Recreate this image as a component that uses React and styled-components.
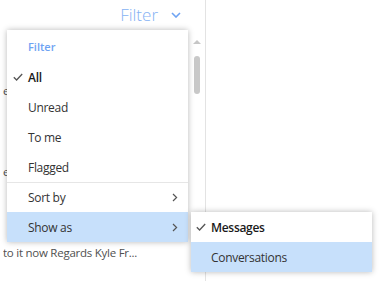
import React from "react";
import styled, { createGlobalStyle } from "styled-components";

const Global = createGlobalStyle`
  html, body { margin: 0; padding: 0; background: #fff; }
  body { font-family: "Open Sans", "Noto Sans", Arial, sans-serif; overflow: hidden; }
  * { box-sizing: border-box; }
`;

const Page = styled.div`
  display: flex;
  width: 390px;
  height: 281px;
  background: #fff;
`;

const ListPane = styled.div`
  position: relative;
  width: 206px;
  height: 100%;
  border-right: 1px solid #e3e3e3;
  display: flex;
  flex-direction: column;
`;

const ReadingPane = styled.div`
  flex: 1;
  background: #fff;
`;

const Header = styled.div`
  height: 30px;
  display: flex;
  justify-content: flex-end;
  align-items: center;
  padding-right: 24px;
`;

const FilterButton = styled.div`
  display: flex;
  align-items: center;
  gap: 13px;
  color: #86b2f4;
  font-size: 17px;
  font-weight: 300;
  line-height: 1;
  padding-bottom: 1px;
`;

const ListBody = styled.div`
  flex: 1;
  display: flex;
  position: relative;
`;

const Messages = styled.div`
  flex: 1;
  display: flex;
  flex-direction: column;
  padding-left: 3px;
  padding-top: 53px;
  gap: 66px;
`;

const Preview = styled.div`
  font-size: 11.5px;
  letter-spacing: -0.25px;
  color: #505050;
  line-height: 15px;
  white-space: nowrap;
  overflow: hidden;
`;

const Scrollbar = styled.div`
  width: 12px;
  display: flex;
  flex-direction: column;
  align-items: center;
  padding-top: 10px;
  gap: 12px;
  margin-right: 2px;
`;

const Arrow = styled.div`
  width: 0;
  height: 0;
  border-left: 4px solid transparent;
  border-right: 4px solid transparent;
  border-bottom: 4px solid #c6c6c6;
`;

const Thumb = styled.div`
  width: 6px;
  height: 38px;
  border-radius: 3px;
  background: #c8c8c8;
`;

const Menu = styled.div`
  position: absolute;
  top: ${(p) => p.$top}px;
  left: ${(p) => p.$left}px;
  width: ${(p) => p.$width}px;
  background: #fff;
  box-shadow: 0 0 6px rgba(0, 0, 0, 0.28);
  display: flex;
  flex-direction: column;
  z-index: ${(p) => p.$z || 10};
`;

const MenuHeader = styled.div`
  height: 32px;
  display: flex;
  align-items: center;
  padding-left: 21px;
  font-size: 11px;
  font-weight: 600;
  color: #6ea3f3;
`;

const Item = styled.div`
  height: 30px;
  display: flex;
  align-items: center;
  font-size: 12px;
  letter-spacing: -0.3px;
  color: ${(p) => (p.$selected ? "#1a1a1a" : "#333")};
  font-weight: ${(p) => (p.$selected ? 600 : 400)};
  background: ${(p) => (p.$active ? "#c7e0fb" : "transparent")};
  border-top: ${(p) => (p.$divider ? "1px solid #e6e6e6" : "none")};
`;

const CheckSlot = styled.div`
  width: ${(p) => p.$w}px;
  display: flex;
  justify-content: center;
  align-items: center;
  flex-shrink: 0;
  color: #555;
`;

const Label = styled.span`
  flex: 1;
`;

const ChevronSlot = styled.div`
  width: 16px;
  display: flex;
  align-items: center;
  color: #555;
`;

const Check = () => (
  <svg width="10" height="8" viewBox="0 0 10 8">
    <path d="M0.8 4.2 L3.6 7 L9.2 1" fill="none" stroke="#555" strokeWidth="1.3" />
  </svg>
);

const Right = () => (
  <svg width="6" height="9" viewBox="0 0 6 9">
    <path d="M1 1 L4.6 4.5 L1 8" fill="none" stroke="#555" strokeWidth="1.2" />
  </svg>
);

const Down = () => (
  <svg width="10" height="6" viewBox="0 0 10 6">
    <path d="M1 1 L5 5 L9 1" fill="none" stroke="#6ea3f3" strokeWidth="1.6" />
  </svg>
);

const filterItems = [
  { label: "All", selected: true },
  { label: "Unread" },
  { label: "To me" },
  { label: "Flagged" },
];

export default function App() {
  return (
    <>
      <Global />
      <Page>
        <ListPane>
          <Header>
            <FilterButton>
              <span>Filter</span>
              <Down />
            </FilterButton>
          </Header>
          <ListBody>
            <Messages>
              <Preview>e I hope you are well. Thanks for</Preview>
              <Preview>e have a look at the attached file</Preview>
              <Preview>to it now Regards Kyle Fr...</Preview>
            </Messages>
            <Scrollbar>
              <Arrow />
              <Thumb />
            </Scrollbar>
          </ListBody>

          <Menu $top={30} $left={7} $width={181}>
            <MenuHeader>Filter</MenuHeader>
            {filterItems.map((it) => (
              <Item key={it.label} $selected={it.selected}>
                <CheckSlot $w={21}>{it.selected ? <Check /> : null}</CheckSlot>
                <Label>{it.label}</Label>
              </Item>
            ))}
            <Item $divider>
              <CheckSlot $w={21} />
              <Label>Sort by</Label>
              <ChevronSlot>
                <Right />
              </ChevronSlot>
            </Item>
            <Item $active>
              <CheckSlot $w={21} />
              <Label>Show as</Label>
              <ChevronSlot>
                <Right />
              </ChevronSlot>
            </Item>
          </Menu>

          <Menu $top={212} $left={191} $width={181} $z={11}>
            <Item $selected>
              <CheckSlot $w={20}>
                <Check />
              </CheckSlot>
              <Label>Messages</Label>
            </Item>
            <Item $active>
              <CheckSlot $w={20} />
              <Label>Conversations</Label>
            </Item>
          </Menu>
        </ListPane>
        <ReadingPane />
      </Page>
    </>
  );
}
